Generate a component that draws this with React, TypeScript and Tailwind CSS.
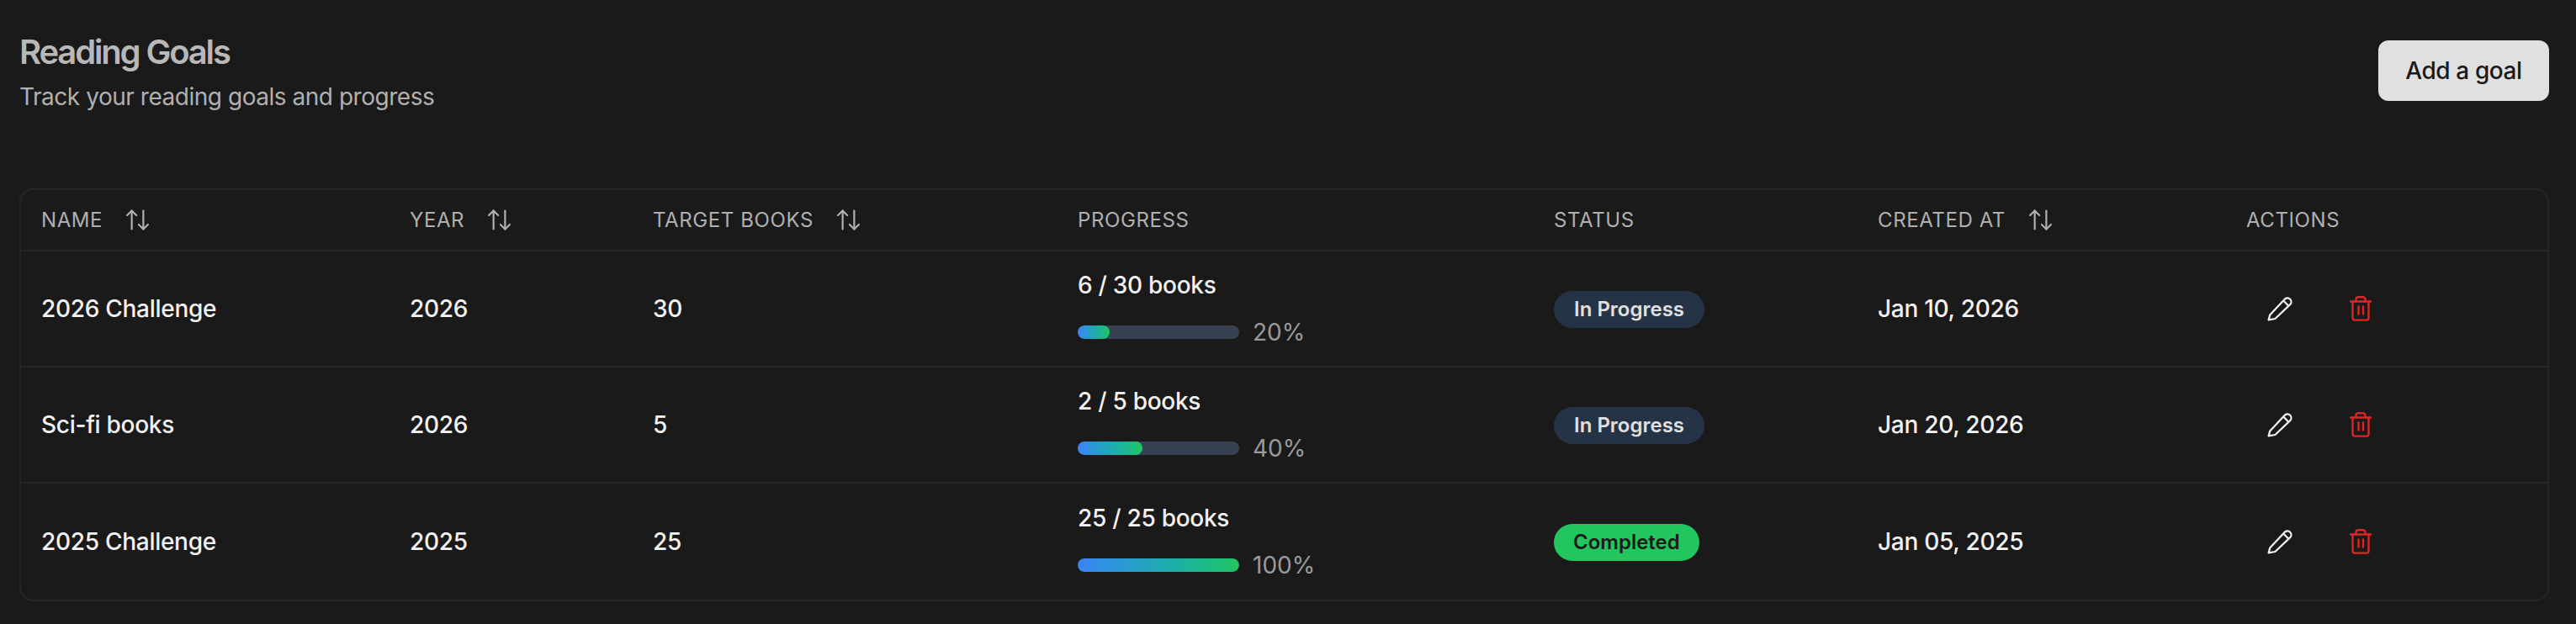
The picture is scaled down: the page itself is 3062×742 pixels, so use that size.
import { ArrowUpDown } from "lucide-react";

const rows = [
  { name: "2026 Challenge", year: "2026", target: "30", progress: "6 / 30 books", pct: 20, status: "In Progress", created: "Jan 10, 2026" },
  { name: "Sci-fi books", year: "2026", target: "5", progress: "2 / 5 books", pct: 40, status: "In Progress", created: "Jan 20, 2026" },
  { name: "2025 Challenge", year: "2025", target: "25", progress: "25 / 25 books", pct: 100, status: "Completed", created: "Jan 05, 2025" },
];

function PencilIcon() {
  return (
    <svg width="30" height="30" viewBox="0 0 30 30" fill="none" stroke="currentColor" strokeWidth="2.2" strokeLinecap="round" strokeLinejoin="round">
      <path d="M1.6 28.4 3.2 22.6 21 3.6a4.5 4.5 0 0 1 6.4 6.3L9.4 27 1.6 28.4Z" />
      <path d="M20 6.2 24.6 11" />
    </svg>
  );
}

function TrashIcon() {
  return (
    <svg width="26" height="30" viewBox="0 0 26 30" fill="none" stroke="currentColor" strokeWidth="2.4" strokeLinecap="round" strokeLinejoin="round">
      <path d="M1 6.5h24" />
      <path d="M3.5 6.5V26a2.6 2.6 0 0 0 2.6 2.6h13.8a2.6 2.6 0 0 0 2.6-2.6V6.5" />
      <path d="M7.5 6.5V4a2.8 2.8 0 0 1 2.8-2.8h5.4A2.8 2.8 0 0 1 18.5 4v2.5" />
      <path d="M10.5 12.5v9M16 12.5v9" />
    </svg>
  );
}

function Head({ label, sort, w }: { label: string; sort?: boolean; w: string }) {
  return (
    <div className={`${w} flex items-center gap-[25px] px-6 text-[24px] tracking-[0.6px] text-[#b0b0b0]`}>
      <span>{label}</span>
      {sort && <ArrowUpDown size={33} strokeWidth={1.6} />}
    </div>
  );
}

export default function App() {
  return (
    <div className="h-[742px] w-[3062px] overflow-hidden bg-[#1a1a1a] pl-[23px] pr-[32px] pt-[32px] font-['Inter',sans-serif] text-[#f2f2f2]">
      <div className="flex items-start justify-between">
        <div>
          <h1 className="text-[40px] font-semibold leading-[60px] tracking-[-2.15px] text-[#b8b8b8]">Reading Goals</h1>
          <p className="mt-[2px] text-[28px] leading-[42px] tracking-[-0.47px] text-[#b0b0b0]">Track your reading goals and progress</p>
        </div>
        <button className="mt-[16px] h-[72px] w-[203px] rounded-[12px] bg-[#e0e0e0] text-[28px] font-medium tracking-[-0.4px] text-[#1a1a1a]">Add a goal</button>
      </div>
      <div className="mt-[88px] overflow-hidden rounded-[16px] border-2 border-[#262626]">
        <div className="flex h-[73px] items-center border-b-2 border-[#262626]">
          <Head label="NAME" sort w="w-[438px]" />
          <Head label="YEAR" sort w="w-[289px]" />
          <Head label="TARGET BOOKS" sort w="w-[505px]" />
          <Head label="PROGRESS" w="w-[566px]" />
          <Head label="STATUS" w="w-[385px]" />
          <Head label="CREATED AT" sort w="w-[438px]" />
          <Head label="ACTIONS" w="flex-1" />
        </div>
        {rows.map((r, i) => (
          <div key={r.name} className={`flex h-[138px] items-center text-[28px] font-medium tracking-[-0.28px] ${i < 2 ? "border-b-2 border-[#262626]" : ""}`}>
            <div className="w-[438px] px-6">{r.name}</div>
            <div className="w-[289px] px-6">{r.year}</div>
            <div className="w-[505px] px-6">{r.target}</div>
            <div className="w-[566px] px-6">
              <div className="leading-[36px]">{r.progress}</div>
              <div className="mt-[20px] flex items-center gap-4">
                <div className="h-4 w-[192px] overflow-hidden rounded-full bg-[#374151]">
                  <div className="h-full rounded-full bg-gradient-to-r from-[#3b82f6] to-[#22c55e]" style={{ width: `${r.pct}%` }} />
                </div>
                <span className="text-[28px] font-normal leading-[36px] tracking-normal text-[#9a9a9a]">{r.pct}%</span>
              </div>
            </div>
            <div className="w-[385px] px-6">
              {r.status === "Completed" ? (
                <span className="inline-flex h-[44px] items-center rounded-full bg-[#22c55e] px-[23px] text-[24px] font-semibold tracking-normal text-[#1a1a1a]">{r.status}</span>
              ) : (
                <span className="inline-flex h-[44px] items-center rounded-full bg-[#253347] px-[24px] text-[24px] font-semibold tracking-normal text-[#e0e0e0]">{r.status}</span>
              )}
            </div>
            <div className="w-[438px] px-6">{r.created}</div>
            <div className="flex flex-1 items-center gap-[68px] pl-[49px]">
              <button className="flex items-center justify-center text-[#f2f2f2]"><PencilIcon /></button>
              <button className="flex items-center justify-center text-[#dc2626]"><TrashIcon /></button>
            </div>
          </div>
        ))}
      </div>
    </div>
  );
}
